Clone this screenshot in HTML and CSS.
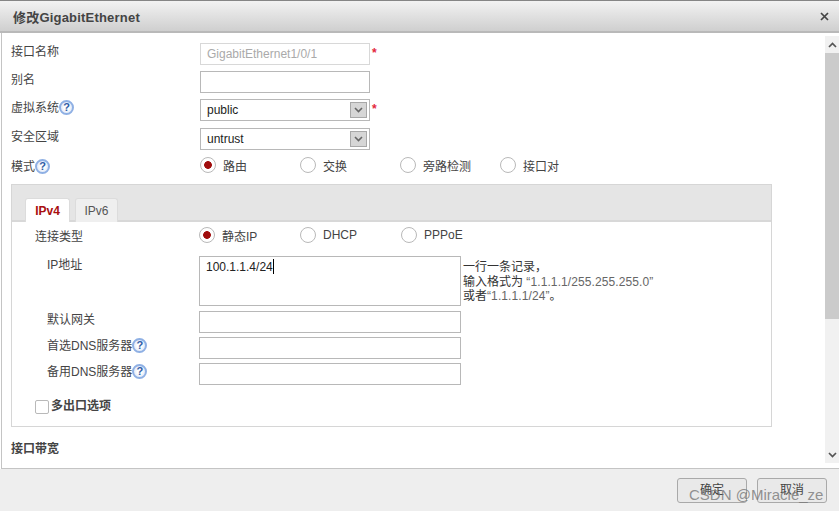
FILE: index.html
```html
<!DOCTYPE html>
<html lang="zh-CN">

<head>
    <meta charset="UTF-8" />
    <title>修改GigabitEthernet</title>
    <link rel="stylesheet" href="styles.css">
</head>

<body>
    <div class="dlg">
        <header class="dlg-head">
            <h2 class="dlg-title">修改GigabitEthernet</h2>
            <svg class="dlg-close" width="9" height="9" viewBox="0 0 9 9">
                <path d="M1 1L8 8M8 1L1 8" stroke="#444" stroke-width="1.7" fill="none" />
            </svg>
        </header>

        <div class="dlg-body">
            <main class="dlg-form">
                <div class="row">
                    <span class="lbl">接口名称</span>
                    <div class="box box-off">GigabitEthernet1/0/1</div>
                    <span class="req">*</span>
                </div>
                <div class="row">
                    <span class="lbl">别名</span>
                    <div class="box"></div>
                </div>
                <div class="row">
                    <span class="lbl">虚拟系统<span class="help">?</span></span>
                    <div class="box box-sel">public
                        <span class="sel-btn">
                            <svg width="9" height="6" viewBox="0 0 9 6">
                                <path d="M1 1L4.5 4.5L8 1" stroke="#666" stroke-width="1.6" fill="none" />
                            </svg>
                        </span>
                    </div>
                    <span class="req">*</span>
                </div>
                <div class="row row-zone">
                    <span class="lbl">安全区域</span>
                    <div class="box box-sel">untrust
                        <span class="sel-btn">
                            <svg width="9" height="6" viewBox="0 0 9 6">
                                <path d="M1 1L4.5 4.5L8 1" stroke="#666" stroke-width="1.6" fill="none" />
                            </svg>
                        </span>
                    </div>
                </div>
                <div class="row row-mode">
                    <span class="lbl">模式<span class="help">?</span></span>
                    <div class="radios">
                        <span class="radio radio-on">路由</span>
                        <span class="radio">交换</span>
                        <span class="radio">旁路检测</span>
                        <span class="radio">接口对</span>
                    </div>
                </div>

                <section class="panel">
                    <div class="tabs">
                        <span class="tab tab-on">IPv4</span>
                        <span class="tab">IPv6</span>
                    </div>
                    <div class="panel-body">
                        <div class="row-in row-type">
                            <span class="lbl-in">连接类型</span>
                            <div class="radios radios-in">
                                <span class="radio radio-on">静态IP</span>
                                <span class="radio">DHCP</span>
                                <span class="radio">PPPoE</span>
                            </div>
                        </div>
                        <div class="row-in row-ip">
                            <span class="lbl-in lbl-sub">IP地址</span>
                            <div class="box area">100.1.1.4/24<span class="caret"></span></div>
                            <p class="hint">一行一条记录，<br />输入格式为 <span class="hint-num">“1.1.1.1/255.255.255.0”</span><br />或者<span class="hint-num">“1.1.1.1/24”</span>。</p>
                        </div>
                        <div class="row-in row-wide">
                            <span class="lbl-in lbl-sub">默认网关</span>
                            <div class="box box-wide"></div>
                        </div>
                        <div class="row-in row-wide">
                            <span class="lbl-in lbl-sub">首选DNS服务器<span class="help">?</span></span>
                            <div class="box box-wide"></div>
                        </div>
                        <div class="row-in row-wide">
                            <span class="lbl-in lbl-sub">备用DNS服务器<span class="help">?</span></span>
                            <div class="box box-wide"></div>
                        </div>
                        <div class="multi">
                            <span class="check"></span>
                            <b class="multi-txt">多出口选项</b>
                        </div>
                    </div>
                </section>

                <h3 class="sect">接口带宽</h3>
            </main>

            <div class="sbar">
                <span class="sbar-btn">
                    <svg width="9" height="6" viewBox="0 0 9 6">
                        <path d="M1 5L4.5 1.5L8 5" stroke="#555" stroke-width="1.7" fill="none" />
                    </svg>
                </span>
                <span class="sbar-thumb"></span>
                <span class="sbar-track"></span>
                <span class="sbar-btn">
                    <svg width="9" height="6" viewBox="0 0 9 6">
                        <path d="M1 1L4.5 4.5L8 1" stroke="#555" stroke-width="1.7" fill="none" />
                    </svg>
                </span>
            </div>
        </div>

        <footer class="dlg-foot">
            <button class="bttn" type="button">确定</button>
            <button class="bttn" type="button">取消</button>
            <span class="wmark">CSDN @Miracle_ze</span>
        </footer>
    </div>
</body>

</html>
```

FILE: styles.css
```css
* {
    box-sizing: border-box;
}

body {
    margin: 0;
    width: 839px;
    height: 511px;
    overflow: hidden;
    background-color: #fff;
    font-family: "Liberation Sans", "Noto Sans CJK SC", sans-serif;
    font-size: 12px;
    color: #444;
}

.dlg {
    position: relative;
    display: flex;
    flex-direction: column;
    height: 511px;
}

.dlg-head {
    display: flex;
    align-items: center;
    justify-content: space-between;
    flex: none;
    height: 33px;
    padding: 0 10px 0 13px;
    border-top: 1px solid #858585;
    border-bottom: 2px solid #b9b9b9;
    background: linear-gradient(#f2f2f2, #cfcfcf);
}

.dlg-title {
    margin: 0;
    font-size: 13px;
    font-weight: bold;
    letter-spacing: 0.2px;
    color: #444;
}

.dlg-body {
    display: flex;
    flex: none;
    height: 436px;
    margin-left: 1px;
    border-left: 1px solid #c4c4c4;
    border-bottom: 1px solid #c4c4c4;
    overflow: hidden;
}

.dlg-form {
    flex: 1;
    padding: 10px 0 0 9px;
}

.row {
    display: flex;
    align-items: flex-start;
    height: 28px;
}

.row-zone {
    margin-top: 1px;
    height: 26px;
}

.row-mode {
    height: 30px;
}

.lbl {
    display: flex;
    align-items: center;
    flex: none;
    width: 189px;
    height: 14px;
}

.row-mode .lbl {
    height: 22px;
}

.box {
    flex: none;
    width: 170px;
    height: 22px;
    padding: 0 6px;
    border: 1px solid #b8b8b8;
    background-color: #fff;
    line-height: 20px;
    color: #222;
}

.box-off {
    border-color: #d8d8d8;
    color: #aaa;
}

.box-sel {
    display: flex;
    align-items: center;
    justify-content: space-between;
    padding-right: 2px;
}

.sel-btn {
    display: flex;
    align-items: center;
    justify-content: center;
    width: 17px;
    height: 16px;
    border: 1px solid #a8a8a8;
    background-color: #d6d6d6;
}

.req {
    margin: 3px 0 0 2px;
    color: #e3263c;
    font-weight: bold;
}

.radios {
    display: flex;
    height: 22px;
}

.radios-in {
    height: 16px;
}

.radio {
    display: flex;
    align-items: center;
    width: 100px;
    color: #444;
}

.radios-in .radio {
    width: 101px;
}

.radio::before {
    content: "";
    flex: none;
    width: 14px;
    height: 14px;
    margin-right: 7px;
    border: 1px solid #b9b9b9;
    border-radius: 50%;
    background-color: #fff;
}

.radio-on::before {
    background: radial-gradient(circle, #a00d0d 0, #a00d0d 3.5px, #fff 4.2px);
}

.help {
    display: inline-block;
    flex: none;
    width: 15px;
    height: 15px;
    margin-top: 2px;
    border: 2px solid #8fb0e4;
    border-radius: 50%;
    background: radial-gradient(circle, #fff 30%, #cfdcf3);
    line-height: 11px;
    text-align: center;
    font-family: "Liberation Sans", sans-serif;
    font-size: 11px;
    font-weight: bold;
    color: #2f5ca6;
}

.panel {
    width: 761px;
    height: 243px;
    margin-top: 0;
    border: 1px solid #d6d6d6;
}

.tabs {
    display: flex;
    align-items: flex-end;
    gap: 5px;
    height: 37px;
    padding-left: 13px;
    background-color: #e5e5e5;
    border-bottom: 2px solid #d8d8d8;
}

.tab {
    width: 43px;
    height: 24px;
    margin-bottom: -2px;
    border: 1px solid #dcdcdc;
    border-bottom: 0;
    border-radius: 3px 3px 0 0;
    background-color: #efefef;
    line-height: 24px;
    text-align: center;
    color: #555;
}

.tab-on {
    width: 45px;
    background-color: #fff;
    font-weight: bold;
    color: #a80e0e;
}

.panel-body {
    padding: 5px 0 0 23px;
}

.row-in {
    display: flex;
    align-items: flex-start;
}

.lbl-in {
    display: flex;
    align-items: center;
    flex: none;
    width: 164px;
    height: 14px;
}

.row-type .lbl-in {
    height: 16px;
}

.lbl-sub {
    width: 152px;
    margin-left: 12px;
}

.row-type {
    height: 29px;
}

.row-ip {
    height: 55px;
}

.area {
    width: 262px;
    height: 50px;
    padding: 2px 6px;
    line-height: 16px;
}

.caret {
    display: inline-block;
    width: 1px;
    height: 15px;
    vertical-align: -3px;
    background-color: #000;
}

.hint {
    margin: 4px 0 0 2px;
    line-height: 14.5px;
    color: #333;
}

.hint-num {
    letter-spacing: 0.1px;
    color: #666;
}

.row-wide {
    height: 26px;
}

.box-wide {
    width: 262px;
}

.multi {
    display: flex;
    align-items: flex-start;
    margin-top: 10px;
}

.check {
    width: 14px;
    height: 14px;
    margin: 1px 2px 0 0;
    border: 1px solid #b9b9b9;
    border-radius: 2px;
}

.multi-txt {
    font-size: 12px;
    line-height: 14px;
    color: #444;
}

.sect {
    margin: 12px 0 0;
    font-size: 12px;
    font-weight: bold;
    color: #444;
}

.sbar {
    display: flex;
    flex-direction: column;
    flex: none;
    width: 14px;
    height: 427px;
    margin-top: 3px;
}

.sbar-btn {
    display: flex;
    align-items: center;
    justify-content: center;
    flex: none;
    height: 17px;
    background-color: #f1f1f1;
}

.sbar-thumb {
    flex: none;
    height: 266px;
    background-color: #cbcbcb;
}

.sbar-track {
    flex: 1;
    background-color: #f1f1f1;
}

.dlg-foot {
    display: flex;
    justify-content: flex-end;
    gap: 10px;
    flex: 1;
    padding: 9px 12px 0 0;
    background-color: #eee;
}

.bttn {
    width: 70px;
    height: 25px;
    padding: 0 0 5px;
    border: 1px solid #a9a9a9;
    border-radius: 3px;
    background-color: #e9e9e9;
    font-family: inherit;
    font-size: 12px;
    color: #444;
}

/* watermark sits over the buttons */
.wmark {
    position: absolute;
    left: 689px;
    top: 486px;
    font-size: 15px;
    color: rgba(120, 120, 120, 0.8);
}
```
